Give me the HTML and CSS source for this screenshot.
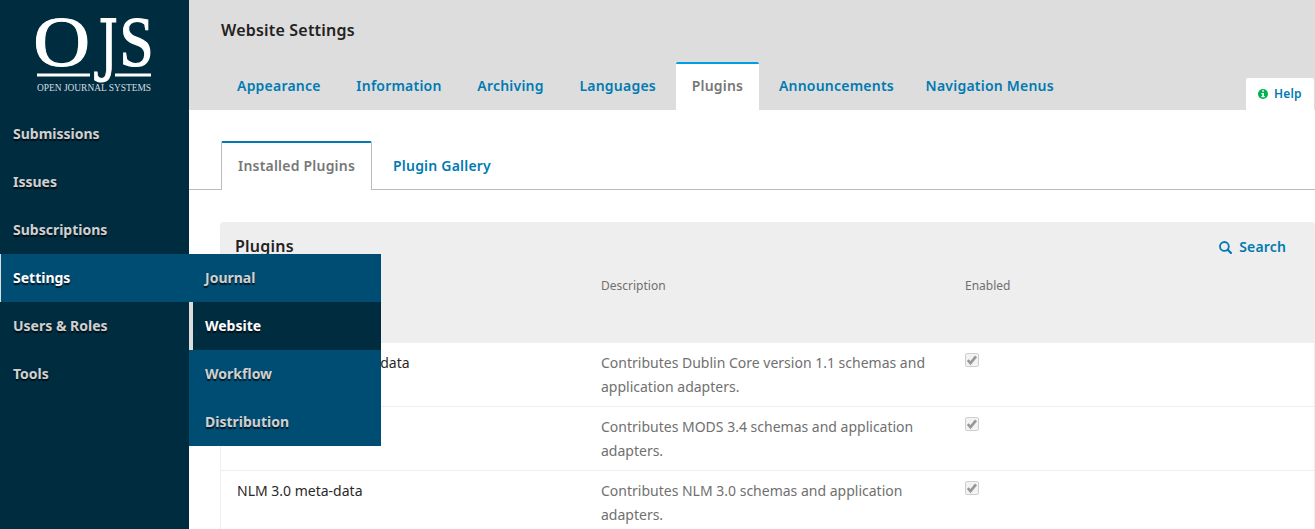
FILE: index.html
```html
<!DOCTYPE html>
<html lang="en">
<head>
<meta charset="utf-8">
<title>Website Settings</title>
<link rel="stylesheet" href="styles.css">
</head>
<body>
<div class="app">
  <aside class="sidebar">
    <svg class="logo" width="189" height="110" viewBox="0 0 189 110">
      <g fill="#fff" stroke="#fff">
        <text class="logo-letter" transform="translate(33.3 65.700) scale(1.14 1.03)" font-size="69" stroke-width="1">O</text>
        <text class="logo-j" transform="translate(98.500 67.500) scale(.72 1)" font-size="68" stroke-width=".9">J</text>
        <text class="logo-letter" transform="translate(119.600 65.700) scale(.89 1.03)" font-size="69" stroke-width="1.200">S</text>
      </g>
      <rect x="37" y="73.500" width="53" height="3" fill="#fff"/>
      <rect x="115" y="73.500" width="36" height="3" fill="#fff"/>
      <text class="logo-caption" x="37" y="91" textLength="114" lengthAdjust="spacingAndGlyphs">OPEN JOURNAL SYSTEMS</text>
    </svg>
    <nav class="menu">
      <a class="menu-item">Submissions</a>
      <a class="menu-item">Issues</a>
      <a class="menu-item">Subscriptions</a>
      <div class="menu-group">
        <a class="menu-item open">Settings</a>
        <div class="submenu">
          <a class="sub-item">Journal</a>
          <a class="sub-item current">Website</a>
          <a class="sub-item">Workflow</a>
          <a class="sub-item">Distribution</a>
        </div>
      </div>
      <a class="menu-item">Users &amp; Roles</a>
      <a class="menu-item">Tools</a>
    </nav>
  </aside>
  <main class="main">
    <header class="header">
      <h1 class="title">Website Settings</h1>
      <div class="header-row">
        <nav class="tabs">
          <a class="tab">Appearance</a>
          <a class="tab">Information</a>
          <a class="tab">Archiving</a>
          <a class="tab">Languages</a>
          <a class="tab active">Plugins</a>
          <a class="tab">Announcements</a>
          <a class="tab last">Navigation Menus</a>
        </nav>
        <a class="help"><svg width="10" height="10" viewBox="0 0 10 10"><circle cx="5" cy="5" r="5" fill="#00b24e"/><path d="M4.200 1.300h1.700v1.500H4.200zM3.400 3.900h2.500v3.200h.8v1.200H3.400V7.100h.8V5.100h-.8z" fill="#fff"/></svg>Help</a>
      </div>
    </header>
    <nav class="subtabs">
      <a class="subtab selected">Installed Plugins</a>
      <a class="subtab">Plugin Gallery</a>
    </nav>
    <section class="grid">
      <div class="grid-head">
        <div class="grid-bar">
          <h2 class="grid-title">Plugins</h2>
          <a class="search"><svg width="13" height="13" viewBox="0 0 13 13" fill="none" stroke="#007ab2" stroke-width="1.800"><circle cx="5.400" cy="5.400" r="4.400"/><path d="M8.700 8.700l3.300 3.300" stroke-width="2.200" stroke-linecap="round"/></svg>Search</a>
        </div>
        <div class="columns"><span></span><span>Description</span><span>Enabled</span></div>
      </div>
      <div class="row"><span class="name">Dublin Core 1.1 meta-data</span><span class="desc">Contributes Dublin Core version 1.1 schemas and application adapters.</span><span class="check"><svg width="14" height="14" viewBox="0 0 14 14"><use href="#checkbox"/></svg></span></div>
      <div class="row"><span class="name"></span><span class="desc">Contributes MODS 3.4 schemas and application adapters.</span><span class="check"><svg width="14" height="14" viewBox="0 0 14 14"><use href="#checkbox"/></svg></span></div>
      <div class="row"><span class="name">NLM 3.0 meta-data</span><span class="desc">Contributes NLM 3.0 schemas and application adapters.</span><span class="check"><svg width="14" height="14" viewBox="0 0 14 14"><g id="checkbox"><rect x=".5" y=".5" width="13" height="13" rx="1.500" fill="#f3f3f3" stroke="#cfcfcf"/><path d="M2.800 7.200l2.700 2.900L11 3.300" fill="none" stroke="#999" stroke-width="2.700"/></g></svg></span></div>
    </section>
  </main>
</div>
</body>
</html>
```
FILE: styles.css
```css
* { box-sizing: border-box; }
body {
  margin: 0;
  font: 14px/24px "Noto Sans", sans-serif;
  color: #222;
  background: #fff;
}
.app { display: flex; width: 1315px; height: 529px; overflow: hidden; }
.sidebar { width: 189px; flex: none; background: #002c40; }
.logo { display: block; }
.logo-letter { font-family: "Liberation Serif", serif; }
.logo-j { font-family: "DejaVu Serif", serif; }
.logo-caption { font: 9.500px "Liberation Serif", serif; fill: #d5dde1; }
.menu-item, .sub-item {
  display: block;
  height: 48px;
  line-height: 48px;
  font-weight: 700;
  color: #d0d0d0;
  text-shadow: 0 2px 1px rgba(0, 0, 0, .7);
}
.menu-item { padding-left: 13px; }
.menu-group { position: relative; }
.menu-item.open { background: #004d73; color: #fff; border-left: 1px solid #ddd; padding-left: 12px; }
.submenu { position: absolute; left: 189px; top: 0; width: 192px; background: #004d73; z-index: 2; }
.sub-item { padding-left: 16px; }
.sub-item.current { background: #002c40; color: #fff; border-left: 4px solid #ddd; padding-left: 12px; }
.main { flex: 1; min-width: 0; }
.header { height: 110px; background: #ddd; padding: 18px 1px 0 32px; }
.title { margin: 0; font-size: 16px; line-height: 24px; font-weight: 600; letter-spacing: .2px; }
.header-row { display: flex; justify-content: space-between; align-items: flex-end; height: 68px; }
.tabs { display: flex; gap: 3.700px; font-weight: 600; }
.tab { height: 48px; line-height: 48px; padding: 0 16px; color: #007ab2; letter-spacing: .22px; white-space: nowrap; }
.tab.active { background: #fff; color: #777; border-top: 2px solid #009de5; line-height: 44px; border-radius: 2px 2px 0 0; }
.tab.last { margin-left: -4px; }
.help {
  display: flex;
  align-items: center;
  gap: 6px;
  width: 68px;
  height: 32px;
  padding-left: 12px;
  border-radius: 2px 2px 0 0;
  background: #fff;
  color: #007ab2;
  font-size: 12px;
  font-weight: 600;
  letter-spacing: .15px;
}
.subtabs { display: flex; height: 80px; padding: 31px 0 0 32px; border-bottom: 1px solid #bbb; font-weight: 600; letter-spacing: .21px; }
.subtab { height: 49px; line-height: 49px; padding: 0 21px; color: #007ab2; }
.subtab.selected {
  width: 151px;
  padding: 0 0 0 16px;
  line-height: 45px;
  color: #777;
  background: #fff;
  border: 1px solid #bbb;
  border-top: 2px solid #007ab2;
  border-bottom: 0;
  border-radius: 2px 2px 0 0;
  white-space: nowrap;
}
.grid { margin: 32px 0 0 31px; border: 1px solid #eee; border-radius: 3px; }
.grid-head { height: 120px; background: #eee; padding: 11px 28px 0 14px; }
.grid-bar { display: flex; justify-content: space-between; }
.grid-title { margin: 0; font-size: 16px; line-height: 24px; font-weight: 600; letter-spacing: .25px; }
.search { display: flex; align-items: center; gap: 7px; height: 26px; color: #007ab2; font-weight: 600; letter-spacing: .15px; }
.columns, .row { display: grid; grid-template-columns: 364px 364px 1fr; }
.columns { padding: 14px 0 0 2px; font-size: 12px; line-height: 24px; color: #707070; }
.row { height: 64px; padding: 8px 16px 0; border-bottom: 1px solid #eee; }
.name { color: #2a2a2a; }
.desc { color: #707070; padding-right: 32px; }
.check svg { display: block; margin-top: 2px; }
```
